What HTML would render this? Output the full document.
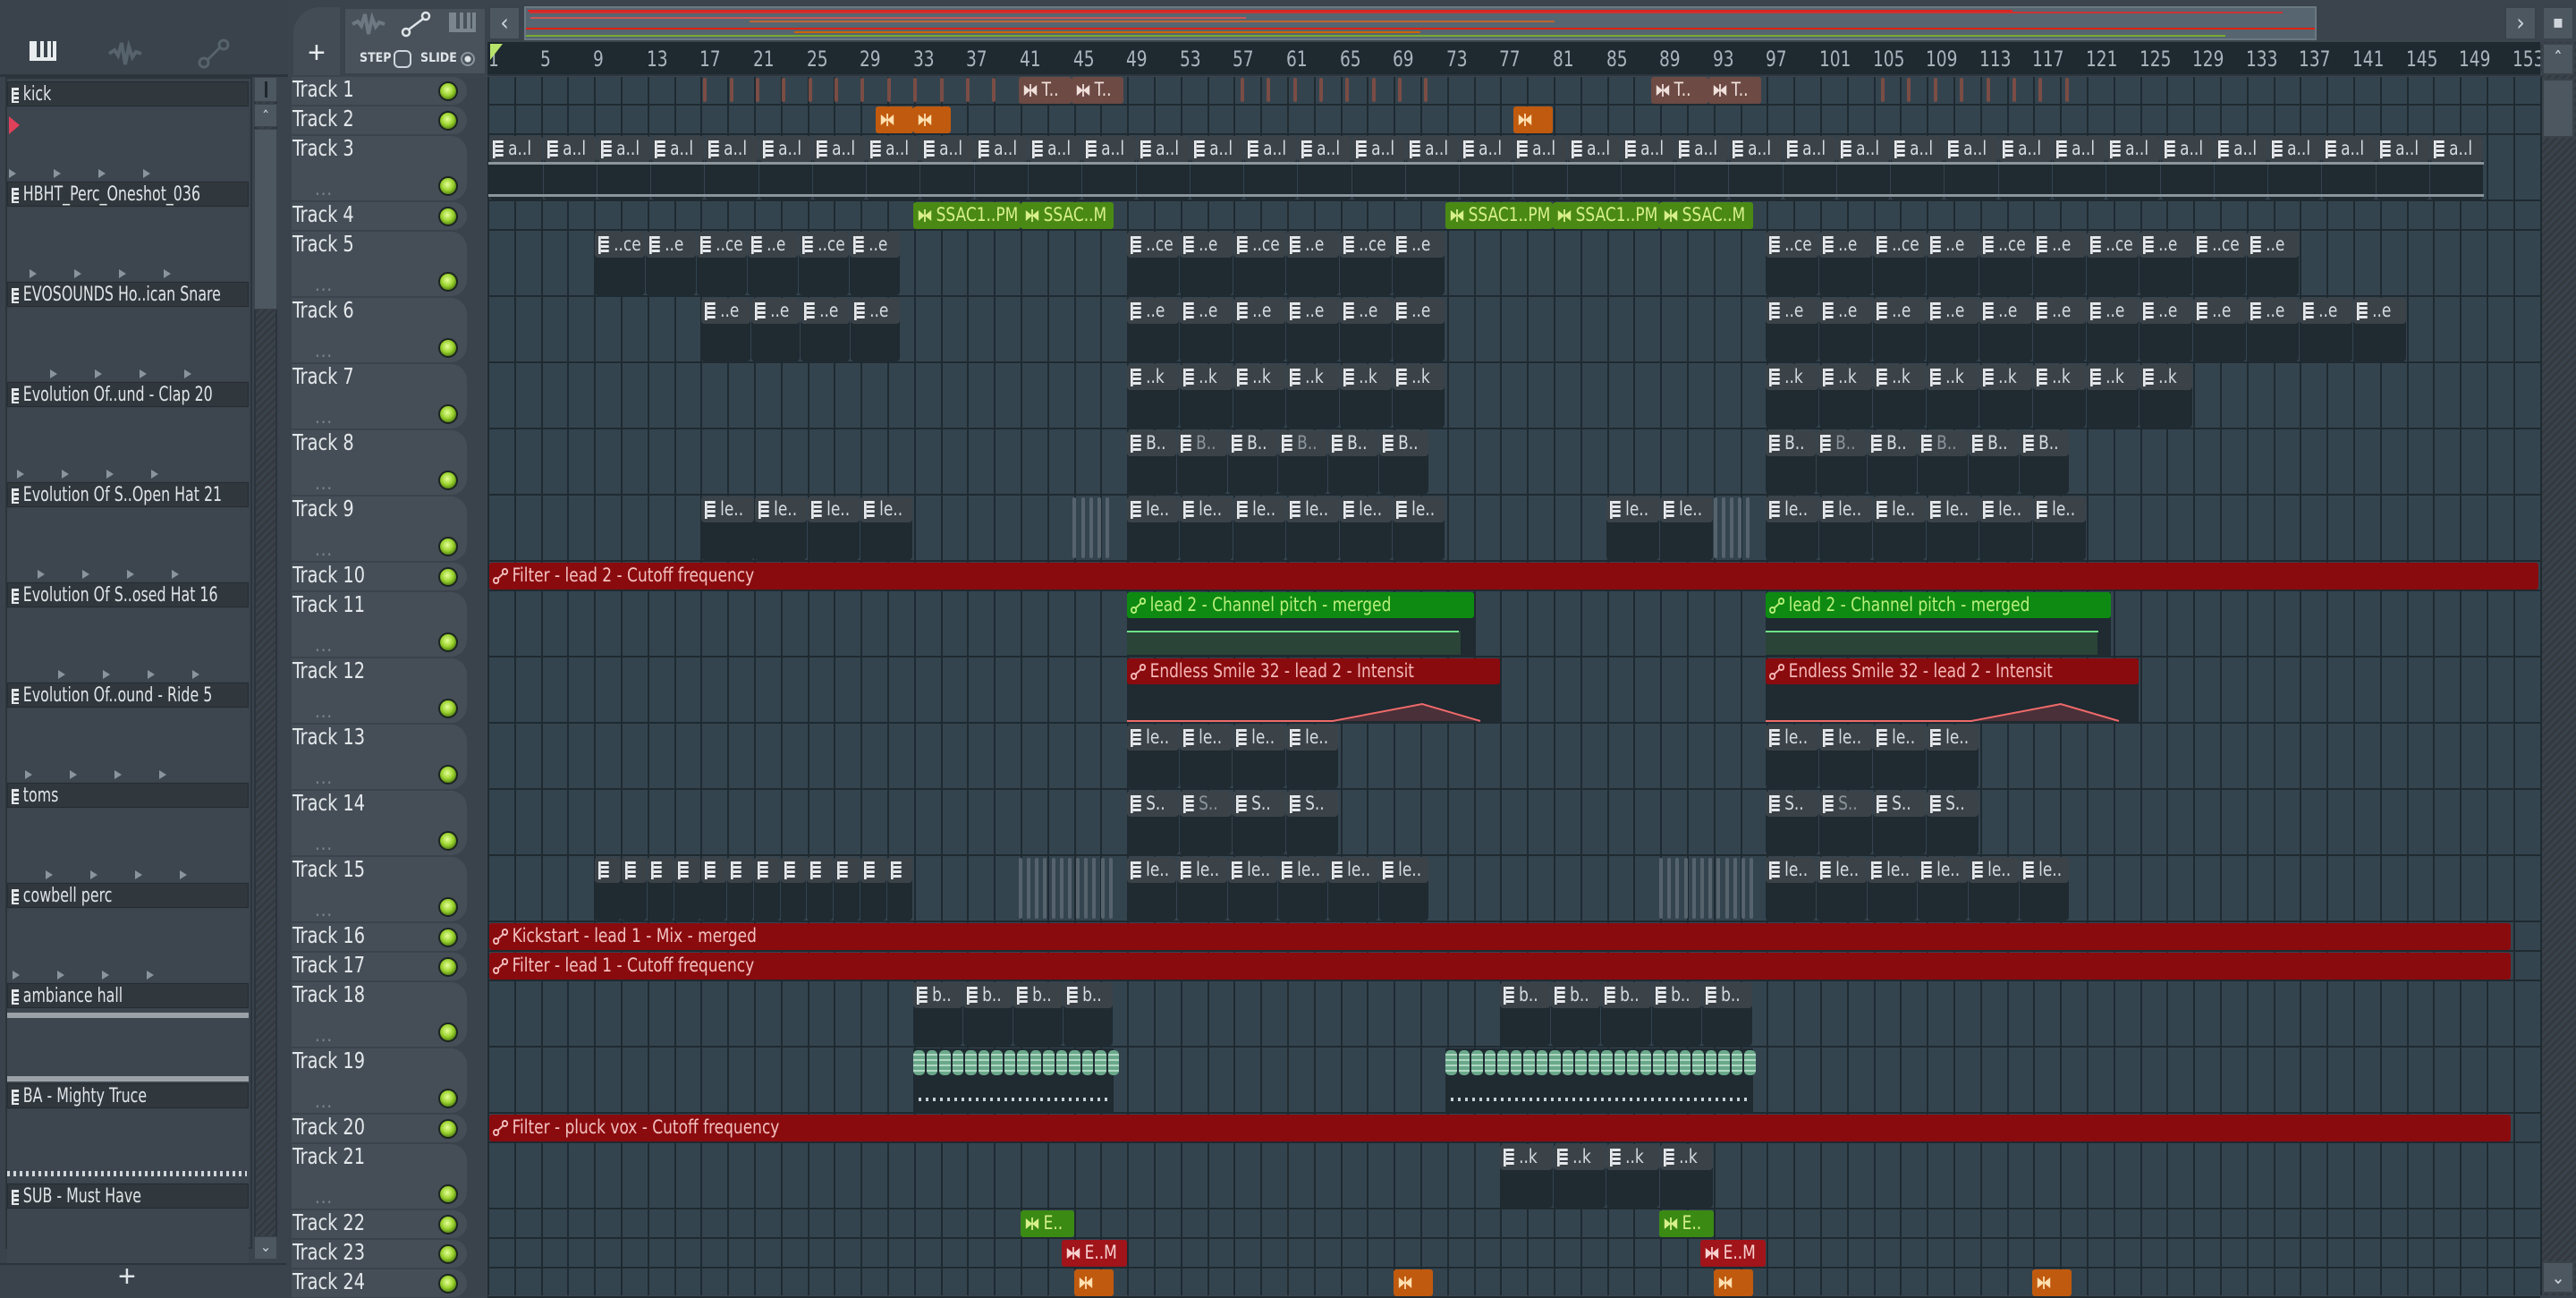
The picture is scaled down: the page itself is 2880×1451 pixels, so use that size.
<!DOCTYPE html>
<html><head><meta charset="utf-8">
<style>
*{margin:0;padding:0;box-sizing:border-box}
body{width:2880px;height:1448px;overflow:hidden;background:#3a434c;font-family:"Liberation Sans Narrow","DejaVu Sans Condensed","Liberation Sans",sans-serif;position:relative}
.a{position:absolute}
.pi{display:inline-block;width:13px;height:20px;background:repeating-linear-gradient(#e6e9ec 0 3px,#3a4046 3px 5px);border-left:3px solid #e6e9ec;vertical-align:middle;margin-right:6px}
.ct{position:absolute;left:4px;top:2px;font-size:21px;white-space:nowrap;overflow:hidden;transform:scaleX(.9);transform-origin:left}
.nm{display:inline-block;transform:scaleX(.86);transform-origin:left}
</style></head><body>
<div id="root"></div>
<script>
const S=2880/1568;
const R=document.getElementById('root');
function el(css,html){const d=document.createElement('div');d.className='a';d.style.cssText=css;if(html)d.innerHTML=html;R.appendChild(d);return d;}
el('left:0;top:0;width:2880px;height:86px;background:#3b444d');
el('left:0;top:0;width:322px;height:86px;background:#3a434c;border-bottom:3px solid #2c343b');
el('left:33px;top:46px;width:30px;height:22px;border:4px solid #e8ecef;border-top:none;background:repeating-linear-gradient(90deg,#e8ecef 0 4px,transparent 4px 8px)');
el('left:120px;top:40px;width:40px;height:40px','<svg width="40" height="40"><path d="M2 20 L8 16 L12 22 L16 8 L20 32 L24 12 L28 24 L32 18 L38 20" stroke="#56626c" stroke-width="4" fill="none"/></svg>');
el('left:220px;top:40px;width:40px;height:40px','<svg width="40" height="40"><circle cx="8" cy="30" r="5" stroke="#56626c" stroke-width="3" fill="none"/><circle cx="30" cy="10" r="5" stroke="#56626c" stroke-width="3" fill="none"/><line x1="12" y1="27" x2="26" y2="13" stroke="#56626c" stroke-width="3"/></svg>');
el('left:328px;top:8px;width:52px;height:76px;background:#434c55;border-radius:30px 0 0 0');
el('left:344px;top:40px;font-size:34px;color:#e8ecef;font-family:Liberation Sans','+');
el('left:384px;top:8px;width:160px;height:76px;background:#49525b;border:2px solid #3a424a');
el('left:392px;top:12px;width:40px;height:30px','<svg width="40" height="30"><path d="M2 15 L8 12 L12 17 L16 4 L20 26 L24 8 L28 18 L32 13 L38 15" stroke="#6d7882" stroke-width="4" fill="none"/></svg>');
el('left:448px;top:12px;width:40px;height:30px','<svg width="34" height="30"><circle cx="6" cy="24" r="4" stroke="#dfe4e8" stroke-width="2.5" fill="none"/><circle cx="28" cy="6" r="4" stroke="#dfe4e8" stroke-width="2.5" fill="none"/><line x1="9" y1="21" x2="25" y2="9" stroke="#dfe4e8" stroke-width="2.5"/></svg>');
el('left:502px;top:14px;width:30px;height:22px;border:4px solid #7b858e;border-top:none;background:repeating-linear-gradient(90deg,#7b858e 0 4px,transparent 4px 8px)');
el('left:402px;top:57px;font-size:14px;color:#dfe4e8;font-weight:bold','STEP');
el('left:440px;top:56px;width:20px;height:20px;border:2px solid #cfd5da;border-radius:6px');
el('left:470px;top:57px;font-size:14px;color:#dfe4e8;font-weight:bold','SLIDE');
el('left:515px;top:58px;width:16px;height:16px;border:2px solid #8a949c;border-radius:50%;background:radial-gradient(#dfe4e8 0 3px,transparent 4px)');
el('left:546px;top:7px;width:36px;height:38px;background:#4d5760;border:2px solid #3a424a;color:#cfd5da;font-size:26px;text-align:center;line-height:34px','&#8249;');
const ov=el('left:586px;top:7px;width:2004px;height:38px;background:#566570;border:2px solid #6a7882;overflow:hidden');
const ovl=[[2,2,1660,'#d22'],[4,4,1960,'#c33'],[10,5,800,'#c55'],[14,250,900,'#b63'],[22,0,2000,'#d21'],[30,0,1900,'#7a3'],[26,300,700,'#c60'],[34,0,2004,'#6a7a86']];
ovl.forEach(o=>{const d=document.createElement('div');d.style.cssText=`position:absolute;top:${o[0]}px;left:${o[1]}px;width:${o[2]}px;height:2px;background:${o[3]}`;ov.appendChild(d);});
el('left:2800px;top:7px;width:36px;height:38px;background:#4d5760;border:2px solid #3a424a;color:#cfd5da;font-size:26px;text-align:center;line-height:34px','&#8250;');
el('left:2842px;top:7px;width:36px;height:38px;background:#4d5760;border:2px solid #3a424a;color:#cfd5da;font-size:20px;text-align:center;line-height:30px','&#9642;');
el('left:545px;top:47px;width:2295px;height:38px;background:#1e2930;border-bottom:2px solid #2b363e');
function bx(b){return 546+(b-1)*14.9;}
for(let b=1;b<=153;b+=4){el(`left:${bx(b)+(b==1?0:-2)}px;top:52px;font-size:24px;color:#a9b4bd`,`<span class="nm">${b}</span>`);}
el('left:548px;top:49px;width:0;height:0;border-left:14px solid #b7e36a;border-bottom:18px solid transparent');
el('left:2840px;top:47px;width:40px;height:1401px;background:repeating-linear-gradient(135deg,#3a434b 0 3px,#33393f 3px 6px)');
el('left:2842px;top:48px;width:36px;height:36px;background:#4d5760;border:2px solid #3a424a;color:#cfd5da;font-size:22px;text-align:center;line-height:36px','&#710;');
el('left:2842px;top:88px;width:36px;height:66px;background:#4d5760;border:2px solid #3a424a');
el('left:2842px;top:1410px;width:36px;height:36px;background:#4d5760;border:2px solid #3a424a;color:#cfd5da;font-size:20px;text-align:center;line-height:32px','&#8964;');
const types='ssbsbbbbbsbbbbbssbbsbsss';
let tops=[],hs=[];let y=85;
for(const t of types){tops.push(y);const h=t=='s'?33:74;hs.push(h);y+=h;}
el('left:322px;top:86px;width:223px;height:1362px;background:#3a434b');
el('left:545px;top:86px;width:2295px;height:1362px;background:#34444f');
for(let b=1;b<=155;b+=2){el(`left:${Math.round(bx(b))-1}px;top:86px;width:2px;height:1362px;background:#1f2a31`);}
for(let i=0;i<24;i++){
  el(`left:545px;top:${tops[i]+hs[i]-2}px;width:2295px;height:2px;background:#1f2a31`);
  el(`left:326px;top:${tops[i]+1}px;width:196px;height:${hs[i]-2}px;background:#454e57;border-radius:0 18px 18px 0`);
  el(`left:327px;top:${tops[i]}px;font-size:25px;color:#e3e7ea`,'<span class="nm">Track '+(i+1)+'</span>');
  const ly=hs[i]==33?tops[i]+6:tops[i]+hs[i]-28;
  el(`left:490px;top:${ly}px;width:22px;height:22px;border-radius:50%;background:radial-gradient(circle at 45% 40%,#e4ff9a 0,#9bd22e 45%,#4a7a10 80%);border:2px solid #1c2420`);
  if(hs[i]==74) el(`left:352px;top:${tops[i]+48}px;font-size:20px;color:#7a858e;letter-spacing:1px`,'...');
}
function X(d){return d*S;}
function pat(t,x1,x2,txt,dim){
  const L=X(x1),W=X(x2)-X(x1),T=tops[t-1],H=hs[t-1];
  el(`left:${L}px;top:${T+1}px;width:${W-1}px;height:${H-3}px;background:#1f2a31;border-radius:4px`);
  el(`left:${L}px;top:${T+1}px;width:${W-1}px;height:29px;background:#3b4349;border-radius:4px;overflow:hidden`,`<span class="ct" style="color:${dim?'#8a949c':'#d6dbdf'}"><span class="pi"></span>${txt||''}</span>`);
}
function row(t,a,b,n,txts,dimset){const w=(b-a)/n;for(let i=0;i<n;i++)pat(t,a+i*w,a+(i+1)*w,txts[i%txts.length],dimset&&dimset.includes(i));}
function solid(t,x1,x2,bg,col,txt,icon,fullH){
  const L=X(x1),W=X(x2)-X(x1),T=tops[t-1],H=hs[t-1];
  const ic=icon=='a'?'<svg width="20" height="18" style="vertical-align:middle;margin-right:4px"><circle cx="4" cy="14" r="3" stroke="currentColor" stroke-width="2" fill="none"/><circle cx="15" cy="4" r="3" stroke="currentColor" stroke-width="2" fill="none"/><line x1="6" y1="12" x2="13" y2="6" stroke="currentColor" stroke-width="2"/></svg>':(icon=='w'?'<svg width="20" height="16" style="vertical-align:middle;margin-right:4px"><path d="M2 2 L10 8 L2 14 Z M18 2 L10 8 L18 14 Z" fill="currentColor"/><line x1="10" y1="1" x2="10" y2="15" stroke="currentColor" stroke-width="2"/></svg>':'');
  const hh=fullH?H-3:29;
  el(`left:${L}px;top:${T+1}px;width:${W}px;height:${hh}px;background:${bg};border-radius:3px;overflow:hidden`,`<span class="ct" style="color:${col}">${ic}${txt||''}</span>`);
}
function stripes(t,a,b,step,c){for(let x=a;x<b;x+=step)el(`left:${X(x)}px;top:${tops[t-1]+2}px;width:4px;height:${hs[t-1]-6}px;background:${c||'#7a4d45'};border-radius:2px`);}
stripes(1,428,620,16);stripes(1,755,880,16);stripes(1,1145,1270,16);
solid(1,620,652,'#6d4a44','#f0e0dc','T..','w',1);solid(1,652,684,'#6d4a44','#f0e0dc','T..','w',1);
solid(1,1005,1040,'#6d4a44','#f0e0dc','T..','w',1);solid(1,1040,1072,'#6d4a44','#f0e0dc','T..','w',1);
[[533,556],[556,579],[921,945]].forEach(c=>solid(2,c[0],c[1],'#c05a0e','#ffe0b0','','w',1));
row(3,298,1512,37,['a..l']);
el(`left:546px;top:${tops[2]+30}px;width:${X(1512)-546}px;height:3px;background:#8b959c`);
el(`left:546px;top:${tops[2]+66}px;width:${X(1512)-546}px;height:3px;background:#8b959c`);
[[556,621,'SSAC1..PM'],[621,678,'SSAC..M'],[880,945,'SSAC1..PM'],[945,1010,'SSAC1..PM'],[1010,1067,'SSAC..M']].forEach(c=>solid(4,c[0],c[1],'#4a8a14','#d8f08a',c[2],'w',1));
row(5,362,548,6,['..ce','..e']);row(5,686,880,6,['..ce','..e']);row(5,1075,1400,10,['..ce','..e']);
row(6,427,548,4,['..e']);row(6,686,880,6,['..e']);row(6,1075,1465,12,['..e']);
row(7,686,880,6,['..k']);row(7,1075,1335,8,['..k']);
row(8,686,870,6,['B..'],[1,3]);row(8,1075,1260,6,['B..'],[1,3]);
row(9,427,556,4,['le..']);row(9,686,880,6,['le..']);row(9,978,1043,2,['le..']);row(9,1075,1270,6,['le..']);
stripes(9,653,678,5,'#56636d');stripes(9,1043,1067,5,'#56636d');
solid(10,298,1545,'#8a0b0e','#f2c0c0','Filter - lead 2 - Cutoff frequency','a',1);
solid(16,298,1528,'#8a0b0e','#f2c0c0','Kickstart - lead 1 - Mix - merged','a',1);
solid(17,298,1528,'#8a0b0e','#f2c0c0','Filter - lead 1 - Cutoff frequency','a',1);
solid(20,298,1528,'#8a0b0e','#f2c0c0','Filter - pluck vox - Cutoff frequency','a',1);
function auto(t,x1,x2,bg,col,txt,body){
  const L=X(x1),W=X(x2)-X(x1),T=tops[t-1],H=hs[t-1];
  el(`left:${L}px;top:${T+1}px;width:${W}px;height:${H-3}px;background:#1f2a31`);
  el(`left:${L}px;top:${T+44}px;width:${W-15}px;height:${H-47}px;background:${body}`);
  solid(t,x1,x2,bg,col,txt,'a',0);
}
auto(11,686,897,'#0e8a12','#b8f07a','lead 2 - Channel pitch - merged','#2a4438');
auto(11,1075,1285,'#0e8a12','#b8f07a','lead 2 - Channel pitch - merged','#2a4438');
el(`left:${X(686)}px;top:${tops[10]+44}px;width:${X(888)-X(686)}px;height:2px;background:#6ee08a`);
el(`left:${X(1075)}px;top:${tops[10]+44}px;width:${X(1277)-X(1075)}px;height:2px;background:#6ee08a`);
auto(12,686,913,'#8a0b0e','#f4b8b8','Endless Smile 32 - lead 2 - Intensit','transparent');
auto(12,1075,1302,'#8a0b0e','#f4b8b8','Endless Smile 32 - lead 2 - Intensit','transparent');
[686,1075].forEach(a=>{const L=X(a),T=tops[11];el(`left:${L}px;top:${T+40}px;width:${X(913)-X(686)}px;height:32px`,`<svg width="420" height="32"><path d="M0 31 L230 31 L330 12 L395 31 Z" fill="#4a3038"/><path d="M0 31 L230 31 L330 12 L395 31" stroke="#ef6a6a" stroke-width="2" fill="none"/></svg>`);});
row(13,686,815,4,['le..']);row(13,1075,1205,4,['le..']);
row(14,686,815,4,['S..'],[1]);row(14,1075,1205,4,['S..'],[1]);
row(15,362,556,12,['']);row(15,686,870,6,['le..']);row(15,1075,1260,6,['le..']);
stripes(15,620,678,5,'#56636d');stripes(15,1010,1067,5,'#56636d');
row(18,556,678,4,['b..']);row(18,913,1067,5,['b..']);
function teal(a,b){const T=tops[18];el(`left:${X(a)}px;top:${T+1}px;width:${X(b)-X(a)}px;height:71px;background:#1f2a31`);for(let x=a;x<b-1;x+=7.9)el(`left:${X(x)}px;top:${T+3}px;width:${7.9*S-2}px;height:28px;background:repeating-linear-gradient(#6aa88a 0 4px,#b0d8c4 4px 6px);border-radius:5px`);
 el(`left:${X(a)+6}px;top:${T+56}px;width:${X(b)-X(a)-10}px;height:4px;background:repeating-linear-gradient(90deg,#c8d0d6 0 3px,transparent 3px 8px)`);}
teal(556,678);teal(880,1067);
row(21,913,1043,4,['..k']);
solid(22,621,654,'#3a8a14','#d8f08a','E..','w',1);solid(22,1010,1043,'#3a8a14','#d8f08a','E..','w',1);
solid(23,646,686,'#a0141a','#f8d0d0','E..M','w',1);solid(23,1035,1075,'#a0141a','#f8d0d0','E..M','w',1);
[654,848,1043,1237].forEach(a=>solid(24,a,a+24,'#c05a0e','#ffe0b0','','w',1));
el('left:6px;top:86px;width:276px;height:1310px;background:#3a434c;border:2px solid #2c343b');
const ch=['kick','HBHT_Perc_Oneshot_036','EVOSOUNDS Ho..ican Snare','Evolution Of..und - Clap 20','Evolution Of S..Open Hat 21','Evolution Of S..osed Hat 16','Evolution Of..ound - Ride 5','toms','cowbell perc','ambiance hall','BA - Mighty Truce','SUB - Must Have'];
ch.forEach((n,i)=>{const T=91+i*112;
 el(`left:8px;top:${T}px;width:270px;height:28px;background:#30373d;border:1px solid #262c31;overflow:hidden`,`<span style="position:absolute;left:4px;top:1px;font-size:22px;color:#e0e4e7;white-space:nowrap;transform:scaleX(.8);transform-origin:left"><span class="pi" style="width:10px;height:17px"></span>${n}</span>`);
 el(`left:8px;top:${T+29}px;width:270px;height:82px;background:#3d464f`);
 if(i<9){for(let k=0;k<4;k++)el(`left:${10+k*50+(i*23)%60}px;top:${T+98}px;width:0;height:0;border-left:8px solid #8a949c;border-top:5px solid transparent;border-bottom:5px solid transparent`);}
 if(i==9){el(`left:8px;top:${T+33}px;width:270px;height:6px;background:#9aa2a8`);el(`left:8px;top:${T+104}px;width:270px;height:6px;background:#9aa2a8`);}
 if(i>=10){el(`left:8px;top:${T+98}px;width:268px;height:6px;background:repeating-linear-gradient(90deg,#d0d6da 0 3px,transparent 3px 7px)`);}
});
el('left:10px;top:130px;width:0;height:0;border-left:12px solid #e0405a;border-top:10px solid transparent;border-bottom:10px solid transparent');
el('left:284px;top:86px;width:26px;height:1310px;background:repeating-linear-gradient(135deg,#3a434b 0 3px,#33393f 3px 6px);border:2px solid #2c343b');
el('left:284px;top:86px;width:26px;height:28px;background:#4d5760;border:1px solid #3a424a','<div style="margin:4px auto;width:3px;height:18px;background:#1f272d"></div>');
el('left:284px;top:116px;width:26px;height:26px;background:#4d5760;border:1px solid #3a424a;color:#cfd5da;font-size:18px;text-align:center;line-height:30px','&#710;');
el('left:284px;top:144px;width:26px;height:202px;background:#4d5760;border:1px solid #3a424a');
el('left:284px;top:1382px;width:26px;height:26px;background:#4d5760;border:1px solid #3a424a;color:#cfd5da;font-size:16px;text-align:center;line-height:22px','&#8964;');
el('left:0;top:1412px;width:320px;height:36px;background:#3a434c;border-top:2px solid #2c343b');
el('left:132px;top:1408px;font-size:34px;color:#dfe4e8;font-family:Liberation Sans','+');
</script>
</body></html>
